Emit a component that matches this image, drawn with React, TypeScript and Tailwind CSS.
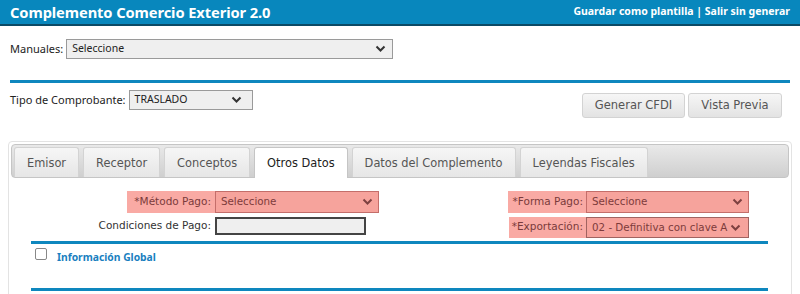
import React from 'react';

const Chevron = ({ className = '' }: { className?: string }) => (
    <svg width="11" height="8" viewBox="0 0 11 8" className={className}>
        <path d="M1.5 1.5 L5.5 5.5 L9.5 1.5" fill="none" stroke="currentColor" strokeWidth="2" />
    </svg>
)

const tabs = ['Emisor', 'Receptor', 'Conceptos', 'Otros Datos', 'Datos del Complemento', 'Leyendas Fiscales']

export default function App() {
    const verdana = { fontFamily: '"DejaVu Sans", Verdana, sans-serif' }

    return (
        <div className="w-[800px] h-[294px] overflow-hidden bg-white" style={{ fontFamily: '"Noto Sans", "DejaVu Sans", sans-serif' }}>
            {/* header */}
            <div className="h-[26px] bg-[#0887bd] border-b-2 border-[#0b4a66] flex items-center justify-between pl-[10px] pr-[10px] text-white font-bold">
                <span className="text-[14.7px] tracking-[-0.1px]">Complemento Comercio Exterior 2.0</span>
                <span className="text-[10.5px]">Guardar como plantilla | Salir sin generar</span>
            </div>

            {/* manuales */}
            <div className="flex items-center pl-[10px] mt-[13px] h-[20px] text-[11px] text-[#222]">
                <span>Manuales:</span>
                <div className="ml-[3px] w-[327px] h-[20px] bg-[#efefef] border border-[#9a9a9a] flex items-center justify-between pl-[5px] pr-[6px] text-[#222]">
                    <span className="text-[10.5px]">Seleccione</span>
                    <Chevron className="text-[#333]" />
                </div>
            </div>

            <div className="mx-[10px] mt-[21px] h-[3px] bg-[#0e87be]" />

            {/* tipo + botones */}
            <div className="flex items-start justify-between pl-[10px] pr-[18px] mt-[5px]">
                <div className="flex items-center h-[20px] text-[11px] text-[#222] mt-[2px]">
                    <span>Tipo de Comprobante:</span>
                    <div className="ml-[3px] w-[124px] h-[20px] bg-[#efefef] border border-[#9a9a9a] flex items-center justify-between pl-[5px] pr-[10px]">
                        <span className="text-[10.5px]">TRASLADO</span>
                        <Chevron className="text-[#333]" />
                    </div>
                </div>
                <div className="flex gap-[3px] mt-[5px]" style={verdana}>
                    <div className="w-[103px] h-[25px] rounded-[3px] border border-[#d3d3d3] bg-gradient-to-b from-[#f6f6f6] to-[#e3e3e3] flex items-center justify-center text-[11.5px] text-[#555]">Generar CFDI</div>
                    <div className="w-[94px] h-[25px] rounded-[3px] border border-[#d3d3d3] bg-gradient-to-b from-[#f6f6f6] to-[#e3e3e3] flex items-center justify-center text-[11.5px] text-[#555]">Vista Previa</div>
                </div>
            </div>

            {/* tabs panel */}
            <div className="ml-[8px] mr-[8px] mt-[23px] border border-[#e3e3e3] rounded-[4px] p-[2px] h-[200px]" style={verdana}>
                <div className="h-[34px] rounded-[4px] border border-[#c5c5c5] bg-gradient-to-b from-[#e9e9e9] to-[#cfcfcf] flex items-end gap-[4px] pl-[2px]">
                    {tabs.map((t) => {
                        const active = t === 'Otros Datos'
                        return (
                            <div
                                key={t}
                                className={
                                    active
                                        ? 'h-[31px] px-[12px] pt-[2px] rounded-t-[3px] border border-b-0 border-[#c5c5c5] bg-white text-[#222] flex items-center text-[11.4px] mb-[-1px]'
                                        : 'h-[30px] px-[12px] pt-[2px] rounded-t-[3px] border border-b-0 border-[#d3d3d3] bg-gradient-to-b from-[#f6f6f6] to-[#e6e6e6] text-[#555] flex items-center text-[11.4px]'
                                }
                            >
                                {t}
                            </div>
                        )
                    })}
                </div>

                <div className="px-[20px]">
                    <div className="flex mt-[13px]">
                        <div className="w-[348px] flex flex-col items-end gap-[4px] text-[10.5px]">
                            <div className="flex h-[22px]">
                                <span className="bg-[#f9aaa4] text-[#7a3b3b] pl-[7px] pr-[4px] pt-[3px]">*Método Pago:</span>
                                <div className="w-[164px] bg-[#f6a39c] border border-[#c46e6a] flex items-center justify-between pl-[5px] pr-[5px] text-[#7d3b3b] text-[10.3px]">
                                    <span>Seleccione</span>
                                    <Chevron className="text-[#7d4040]" />
                                </div>
                            </div>
                            <div className="flex h-[18px] pr-[13px]">
                                <span className="text-[#333] pr-[4px] pt-[1px]">Condiciones de Pago:</span>
                                <div className="w-[151px] bg-[#efefef] border-2 border-[#444]" />
                            </div>
                        </div>
                        <div className="flex-1 flex flex-col items-end pr-[20px] gap-[4px] text-[10.5px]">
                            <div className="flex h-[22px]">
                                <span className="bg-[#f9aaa4] text-[#7a3b3b] pl-[5px] pr-[3px] pt-[3px]">*Forma Pago:</span>
                                <div className="w-[163px] bg-[#f6a39c] border border-[#c46e6a] flex items-center justify-between pl-[5px] pr-[5px] text-[#7d3b3b] text-[10.3px]">
                                    <span>Seleccione</span>
                                    <Chevron className="text-[#7d4040]" />
                                </div>
                            </div>
                            <div className="flex h-[21px]">
                                <span className="bg-[#f9aaa4] text-[#7a3b3b] pl-[3px] pr-[3px] pt-[2px]">*Exportación:</span>
                                <div className="w-[163px] bg-[#f6a39c] border border-[#a06360] flex items-center pl-[5px] pr-[2px] text-[#7d3b3b] text-[10.3px] overflow-hidden whitespace-nowrap">
                                    <span>02 - Definitiva con clave A</span>
                                    <Chevron className="text-[#7d4040] shrink-0 ml-[3px]" />
                                </div>
                            </div>
                        </div>
                    </div>

                    <div className="mt-[3px] h-[3px] bg-[#0e87be] mr-[1px]" />
                    <div className="flex items-start h-[44px] pl-[4px] pt-[4px]">
                        <div className="w-[12px] h-[12px] border border-[#888] rounded-[2px] bg-white" />
                        <span className="ml-[10px] mt-[2px] text-[10.3px] font-bold text-[#1a7fbf]" style={{ fontFamily: '"Noto Sans", sans-serif' }}>Información Global</span>
                    </div>
                    <div className="h-[3px] bg-[#0e87be] mr-[1px]" />
                </div>
            </div>
        </div>
    )
}
